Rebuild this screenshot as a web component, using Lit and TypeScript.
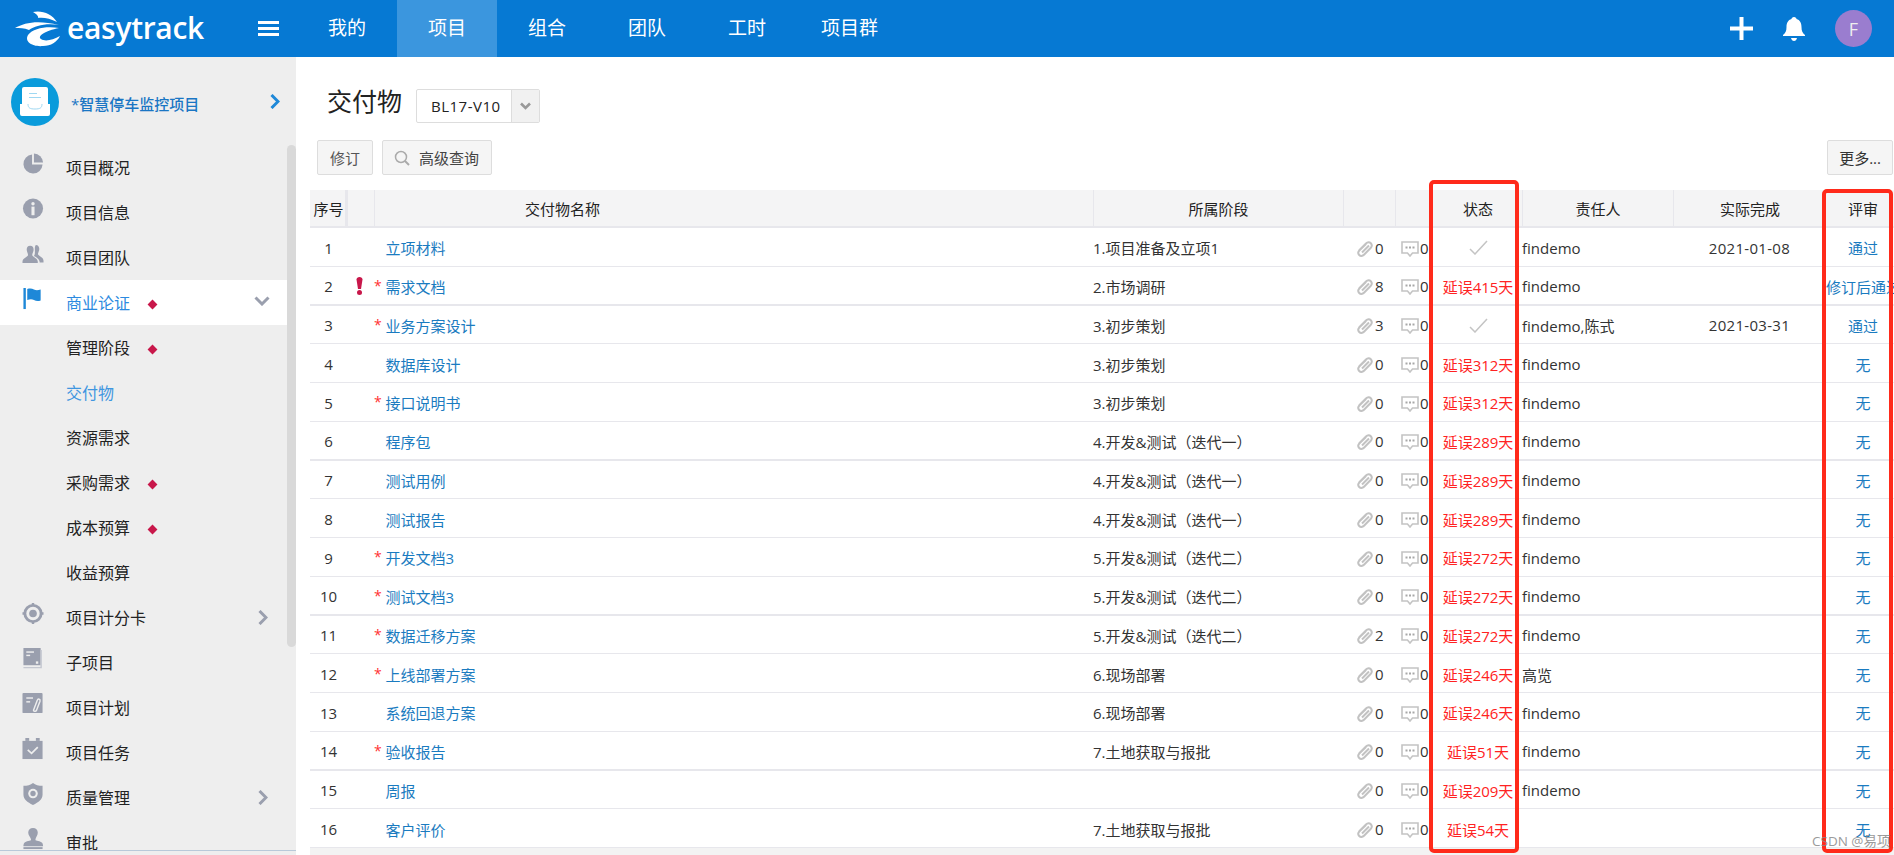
import { LitElement, html, css, svg } from "lit";
import { customElement } from "lit/decorators.js";

const G = "#9a9fae";
const icons: Record<string, any> = {
  pie: svg`<path fill="${G}" d="M10 1.500A10 10 0 1 0 21 12H10Z"/><path fill="${G}" d="M12 0.500A10 10 0 0 1 21.500 10H12Z"/>`,
  info: svg`<circle cx="11" cy="11" r="10.500" fill="${G}"/><circle cx="11" cy="6" r="1.800" fill="#eee"/><rect x="9.400" y="9" width="3.200" height="9" fill="#eee"/>`,
  team: svg`<path fill="${G}" d="M14 2c3 0 4 3 3.400 5.500-.4 1.600-1.200 3-1.200 4 0 2 5.800 3 5.800 7v2h-4c0-4-3.500-5.500-6-7 1-1.500 1-3 1-5 0-2.500-.5-4.500 1-6.500Z"/><path fill="${G}" d="M8 3c3 0 4 2.500 3.500 5-.4 1.800-1.300 3-1.300 4.500C10.200 14.500 16 15.500 16 19.500V21H0v-1.500c0-4 5.800-5 5.800-7C5.800 11 5 9.800 4.600 8 4 5.500 5 3 8 3Z"/>`,
  flag: svg`<rect x="1" y="0" width="2.500" height="22" fill="#1e88d8"/><path fill="#1e88d8" d="M5 1c3-1 5-.5 7 .5s4 1 7 0V13c-3 1-5 .5-7-.5s-4-1-7 0Z"/>`,
  target: svg`<circle cx="11" cy="11" r="8.500" fill="none" stroke="${G}" stroke-width="3"/><circle cx="11" cy="11" r="4" fill="${G}"/><path stroke="${G}" stroke-width="2.500" d="M11 0v3M11 19v3M0 11h3M19 11h3"/>`,
  sub: svg`<rect x="1" y="0" width="18" height="18" fill="${G}"/><path d="M1 20.500h18.500V2" fill="none" stroke="#c4c7d0" stroke-width="1.500"/><rect x="4" y="3.500" width="8" height="1.500" fill="#eee"/><rect x="4" y="7" width="4" height="1.500" fill="#eee"/><rect x="14" y="14" width="2.500" height="2.500" fill="#eee"/>`,
  plan: svg`<rect x="0" y="0" width="21" height="21" rx="1" fill="${G}"/><rect x="4" y="4.500" width="7" height="1.500" fill="#eee"/><rect x="4" y="8.500" width="4" height="1.500" fill="#eee"/><path d="M11.500 18 15.500 7.500c.8-2 3.500-1 2.800 1L14.500 18.500c-.5 1-3 .8-3-.5Z" fill="none" stroke="#eee" stroke-width="1.500"/>`,
  task: svg`<rect x="0" y="3" width="21" height="19" fill="${G}"/><rect x="3" y="0" width="4" height="3" fill="${G}"/><rect x="14" y="0" width="4" height="3" fill="${G}"/><path d="M5.500 12.500 9.500 16 16 9.500" fill="none" stroke="#eee" stroke-width="1.800"/>`,
  shield: svg`<path fill="${G}" d="M11 0c2.500 2 6 3 10 3v9c0 5-4 8-10 11C5 20 1 17 1 12V3c4 0 7.500-1 10-3Z"/><circle cx="11" cy="11" r="5" fill="#eee"/><circle cx="11" cy="11" r="2.800" fill="${G}"/>`,
  stamp: svg`<path fill="${G}" d="M11 0c3 0 5 2 5 5 0 3-2.500 5-2.500 7.500 0 1 5.500 1 7 3 .8 1 1 2.500 1 3.500H1c0-1 .2-2.500 1-3.500 1.500-2 7-2 7-3C9 10 6 8 6 5c0-3 2-5 5-5Z"/><rect x="1" y="20" width="20" height="2" fill="${G}"/>`,
};

type Item = { label: string; icon?: string; dot?: boolean; chev?: "r" | "d"; cls?: string };
const items: Item[] = [
  { label: "项目概况", icon: "pie" },
  { label: "项目信息", icon: "info" },
  { label: "项目团队", icon: "team" },
  { label: "商业论证", icon: "flag", dot: true, chev: "d", cls: "open" },
  { label: "管理阶段", dot: true },
  { label: "交付物", cls: "cur" },
  { label: "资源需求" },
  { label: "采购需求", dot: true },
  { label: "成本预算", dot: true },
  { label: "收益预算" },
  { label: "项目计分卡", icon: "target", chev: "r" },
  { label: "子项目", icon: "sub" },
  { label: "项目计划", icon: "plan" },
  { label: "项目任务", icon: "task" },
  { label: "质量管理", icon: "shield", chev: "r" },
  { label: "审批", icon: "stamp" },
];

const P4a = "4.开发&测试（迭代一）";
const P4b = "5.开发&测试（迭代二）";
const rows = [
  { n: "立项材料", p: "1.项目准备及立项1", a: 0, s: "", o: "findemo", d: "2021-01-08", r: "通过" },
  { n: "需求文档", star: 1, warn: 1, p: "2.市场调研", a: 8, s: "延误415天", o: "findemo", d: "", r: "修订后通过" },
  { n: "业务方案设计", star: 1, p: "3.初步策划", a: 3, s: "", o: "findemo,陈式", d: "2021-03-31", r: "通过" },
  { n: "数据库设计", p: "3.初步策划", a: 0, s: "延误312天", o: "findemo", d: "", r: "无" },
  { n: "接口说明书", star: 1, p: "3.初步策划", a: 0, s: "延误312天", o: "findemo", d: "", r: "无" },
  { n: "程序包", p: P4a, a: 0, s: "延误289天", o: "findemo", d: "", r: "无" },
  { n: "测试用例", p: P4a, a: 0, s: "延误289天", o: "findemo", d: "", r: "无" },
  { n: "测试报告", p: P4a, a: 0, s: "延误289天", o: "findemo", d: "", r: "无" },
  { n: "开发文档3", star: 1, p: P4b, a: 0, s: "延误272天", o: "findemo", d: "", r: "无" },
  { n: "测试文档3", star: 1, p: P4b, a: 0, s: "延误272天", o: "findemo", d: "", r: "无" },
  { n: "数据迁移方案", star: 1, p: P4b, a: 2, s: "延误272天", o: "findemo", d: "", r: "无" },
  { n: "上线部署方案", star: 1, p: "6.现场部署", a: 0, s: "延误246天", o: "高览", d: "", r: "无" },
  { n: "系统回退方案", p: "6.现场部署", a: 0, s: "延误246天", o: "findemo", d: "", r: "无" },
  { n: "验收报告", star: 1, p: "7.土地获取与报批", a: 0, s: "延误51天", o: "findemo", d: "", r: "无" },
  { n: "周报", p: "", a: 0, s: "延误209天", o: "findemo", d: "", r: "无" },
  { n: "客户评价", p: "7.土地获取与报批", a: 0, s: "延误54天", o: "", d: "", r: "无" },
];

const chevron = (dir: "r" | "d") =>
  dir === "d"
    ? html`<svg class="chev cd" width="16" height="10" viewBox="0 0 16 10"><path d="M1.500 1.500 8 8l6.500-6.500" fill="none" stroke="#9a9fae" stroke-width="3"/></svg>`
    : html`<svg class="chev cr" width="10" height="15" viewBox="0 0 10 15"><path d="M1.500 1 8 7.500 1.500 14" fill="none" stroke="#9a9fae" stroke-width="3"/></svg>`;

@customElement("app-root")
export class AppRoot extends LitElement {
  static styles = css`
    :host { display: block; width: 100%; height: 855px; overflow: hidden; position: relative;
      font-family: "Open Sans", "Noto Sans CJK SC", sans-serif; font-size: 15px; color: #333; }
    .top { height: 57px; background: #0679d3; display: flex; align-items: stretch; color: #fff; }
    .logo { width: 258px; display: flex; align-items: center; padding-left: 15px; box-sizing: border-box; gap: 6px; }
    .logo-t { font-size: 30px; font-weight: 600; letter-spacing: -0.3px; line-height: 1; margin-top: -2px; }
    .burger { width: 39px; display: flex; flex-direction: column; gap: 3px; padding-top: 21px; box-sizing: border-box; }
    .burger i { display: block; width: 21px; height: 3px; background: #fff; }
    .tab { min-width: 100px; padding: 0 24px 3px; box-sizing: border-box; display: flex; align-items: center; justify-content: center; font-size: 19px; }
    .tab.on { background: #3b96de; }
    .top-r { margin-left: auto; display: flex; align-items: center; padding-right: 22px; }
    .avatar { width: 37px; height: 37px; border-radius: 50%; background: #9a7dcf; color: #eee; display: flex; align-items: center; justify-content: center; font-size: 18px; margin-left: 30px; }
    .bell { margin-left: 30px; }
    .body { display: flex; height: 798px; }
    .side { width: 296px; flex: none; background: #eee; display: flex; flex-direction: column; position: relative; }
    .proj { height: 88px; flex: none; display: flex; align-items: center; padding-left: 11px; box-sizing: border-box; padding-top: 1px; }
    .proj-ic { width: 48px; height: 48px; flex: none; margin-right: 12px; }
    .proj-t { color: #1a76c4; font-size: 15px; font-weight: 500; flex: 1; margin-top: 3px; }
    .proj-c { margin-right: 16px; }
    .list { flex: 1; overflow: hidden; padding-right: 9px; border-bottom: 1px solid #b9c9d9; margin-bottom: 4px; }
    .item { height: 45px; display: flex; align-items: center; padding-left: 22px; font-size: 16px; color: #222; position: relative; }
    .ic { width: 22px; height: 22px; flex: none; margin-right: 22px; margin-top: -7px; }
    .lab { line-height: 1; margin-top: 1px; }
    .item.open { background: #fff; color: #2b8ae0; }
    .item.cur { color: #3f96e0; }
    .dot { width: 7px; height: 7px; background: #c8174a; transform: rotate(45deg); margin: 3px 0 0 19px; }
    .chev { position: absolute; }
    .cd { right: 17px; top: 16px; }
    .cr { right: 19px; top: 15px; }
    .thumb { position: absolute; right: 0; top: 88px; width: 9px; height: 502px; background: #d9d9d9; border-radius: 5px; }
    .main { flex: 1; min-width: 0; overflow: hidden; display: flex; flex-direction: column; }
    .head { display: flex; padding: 26px 0 0 31px; margin-bottom: 17px; }
    .title { font-size: 25px; line-height: 36px; color: #222; margin-right: 14px; }
    .sel { margin-top: 6px; width: 124px; height: 34px; box-sizing: border-box; border: 1px solid #ddd; border-radius: 2px; display: flex; color: #222; font-size: 15px; letter-spacing: 0.5px; }
    .sel-t { flex: 1; padding-left: 14px; line-height: 32px; }
    .sel-b { width: 27px; background: #f1f1f1; border-left: 1px solid #ddd; display: flex; align-items: center; justify-content: center; }
    .tools { display: flex; gap: 9px; padding: 0 1px 0 21px; margin-bottom: 15px; }
    .btn { height: 35px; box-sizing: border-box; border: 1px solid #ddd; border-radius: 2px; background: #f5f5f5; padding: 0 12px; display: flex; align-items: center; font-size: 15px; color: #444; }
    .btn.gray { color: #555; }
    .btn.more { margin-left: auto; color: #333; padding: 0 11px; }
    .btn svg { margin-right: 9px; margin-left: -1px; }
    .tbl { margin-left: 14px; width: 1590px; flex: none; }
    .row { display: grid; grid-template-columns: 37px 27px 719px 250px 52px 39px 88px 151px 153px 74px; height: 38.75px; box-sizing: border-box; border-bottom: 1px solid #e7e7ec; align-items: center; white-space: nowrap; padding-top: 2px; }
    .row.thick { border-bottom-width: 2px; }
    .row.hd { height: 38px; background: #f4f4f5; border-bottom: 2px solid #e7e7ec; color: #222; align-items: stretch; padding-top: 0; }
    .hd > div { display: flex; align-items: center; justify-content: center; border-left: 1px solid #e7e7ec; }
    .hd > div:first-child { border-left: 0; border-right: 2px solid #e7e7ec; padding-left: 2px; }
    .hd > .hn { justify-content: flex-start; padding-left: 150px; }
    .hd > .hb { border-left: 0; }
    .ctr { text-align: center; }
    .date { letter-spacing: 0.3px; }
    .warn { display: flex; justify-content: center; padding-right: 3px; }
    .name { display: flex; align-items: center; }
    .star { width: 11.500px; flex: none; color: #f33; font-size: 14px; margin-top: -2px; }
    .link { color: #1a7bc0; }
    .cnt { display: flex; align-items: center; }
    .cnt.a { padding-left: 14px; gap: 2px; color: #333; }
    .cnt.c { padding-left: 6px; gap: 1px; }
    .cnt svg { margin-top: 2px; flex: none; }
    .st { color: #f22; text-align: center; display: flex; justify-content: center; align-items: center; }
    .foot { flex: 1; margin-left: 14px; background: #f3f3f3; }
    .redbox { position: absolute; border: 4px solid #ff2a1a; border-radius: 5px; box-sizing: border-box; pointer-events: none; }
    .r1 { left: 1429px; top: 180px; width: 90px; height: 673px; }
    .r2 { left: 1822px; top: 189px; width: 71px; height: 664px; }
    .wm { position: absolute; left: 1812px; top: 830px; font-size: 13.500px; color: #8a8a8a; opacity: .85; white-space: nowrap; }
  `;

  render() {
    return html`
      <div class="top">
        <div class="logo">
          <svg width="46" height="36" viewBox="0 0 46 36" fill="#fff">
            <path d="M18 1C27-1 37 3 42 11 35 7 27 6 23 7 24 5 21 3 18 1Z"/>
            <path d="M0 17C10 11 24 9 44 14 30 12 20 15 14 19 9 17 5 17 0 17Z"/>
            <path d="M44 17C32 15 18 17 13 24 9 31 18 36 28 35 36 35 42 31 45 25 38 29 30 31 26 28 22 25 30 20 44 17Z"/>
          </svg>
          <span class="logo-t">easytrack</span>
        </div>
        <div class="burger"><i></i><i></i><i></i></div>
        ${["我的", "项目", "组合", "团队", "工时", "项目群"].map(
          (t) => html`<div class="tab ${t === "项目" ? "on" : ""}">${t}</div>`
        )}
        <div class="top-r">
          <svg width="23" height="23" viewBox="0 0 23 23"><path d="M11.500 0v23M0 11.500h23" stroke="#fff" stroke-width="4"/></svg>
          <svg class="bell" width="22" height="24" viewBox="0 0 22 24" fill="#fff"><path d="M11 0c1.500 0 2.500 1 2.500 2C17 3 18.500 6 18.500 10c0 4 1 6 3.500 8v1H0v-1c2.500-2 3.500-4 3.500-8 0-4 1.500-7 5-8 0-1 1-2 2.500-2Z"/><path d="M8 21h6c-.5 2-1.500 3-3 3s-2.500-1-3-3Z"/></svg>
          <div class="avatar">F</div>
        </div>
      </div>
      <div class="body">
        <aside class="side">
          <div class="proj">
            <svg class="proj-ic" viewBox="0 0 48 48">
              <circle cx="24" cy="24" r="24" fill="#0a9bdb"/>
              <rect x="11" y="9" width="26" height="24" rx="2" fill="#fff"/>
              <rect x="18" y="15" width="8" height="1" fill="#9fd8f2"/><rect x="18" y="19" width="12" height="1" fill="#9fd8f2"/>
              <path d="M9 26h8c0 4 2 5 7 5s7-1 7-5h8v10a2 2 0 0 1-2 2H11a2 2 0 0 1-2-2Z" fill="#fff"/>
              <path d="M17 26c0 4 2 5 7 5s7-1 7-5" fill="none" stroke="#9fd8f2"/>
            </svg>
            <div class="proj-t">*智慧停车监控项目</div>
            <svg class="proj-c" width="10" height="15" viewBox="0 0 10 15"><path d="M1.500 1 8 7.500 1.500 14" fill="none" stroke="#1e88d8" stroke-width="3"/></svg>
          </div>
          <div class="list">
            ${items.map(
              (it) => html`<div class="item ${it.cls ?? ""}">
                <svg class="ic" viewBox="0 0 22 23">${it.icon ? icons[it.icon] : ""}</svg>
                <span class="lab">${it.label}</span>
                ${it.dot ? html`<span class="dot"></span>` : ""}
                ${it.chev ? chevron(it.chev) : ""}
              </div>`
            )}
          </div>
          <div class="thumb"></div>
        </aside>
        <main class="main">
          <div class="head">
            <div class="title">交付物</div>
            <div class="sel">
              <div class="sel-t">BL17-V10</div>
              <div class="sel-b"><svg width="11" height="8" viewBox="0 0 11 8"><path d="M1 1.500 5.500 6 10 1.500" fill="none" stroke="#999" stroke-width="2.600"/></svg></div>
            </div>
          </div>
          <div class="tools">
            <div class="btn gray">修订</div>
            <div class="btn">
              <svg width="16" height="16" viewBox="0 0 16 16"><circle cx="7" cy="7" r="5.500" fill="none" stroke="#aaa" stroke-width="1.500"/><path d="M11 11l4 4" stroke="#aaa" stroke-width="2"/></svg>
              高级查询
            </div>
            <div class="btn more">更多...</div>
          </div>
          <div class="tbl">
            <div class="row hd">
              <div>序号</div><div></div><div class="hn">交付物名称</div><div>所属阶段</div><div></div><div></div>
              <div class="hb">状态</div><div>责任人</div><div>实际完成</div><div class="hb">评审</div>
            </div>
            ${rows.map(
              (r, i) => html`<div class="row ${i % 4 === 1 ? "thick" : ""}">
                <div class="ctr">${i + 1}</div>
                <div class="warn">${r.warn
                  ? html`<svg width="7" height="18" viewBox="0 0 7 18"><path d="M.5 2.500C.5 1 1.800 0 3.500 0s3 1 3 2.500L5 12H2Z" fill="#c8174a"/><circle cx="3.500" cy="15.500" r="2.500" fill="#c8174a"/></svg>`
                  : ""}</div>
                <div class="name"><span class="star">${r.star ? "*" : ""}</span><span class="link">${r.n}</span></div>
                <div>${r.p}</div>
                <div class="cnt a">
                  <svg width="16" height="16" viewBox="0 0 16 16"><path d="M2 9.500 9 2.500c1.500-1.500 3.600-1.500 4.800-.2s1.200 3.200-.2 4.700L7 13.800c-1.500 1.500-3.600 1.500-4.800.2S1 10.800 2.500 9.300L9 3M5 11.500 12 4.500" fill="none" stroke="#c2c2c2" stroke-width="2"/></svg>
                  <span>${r.a}</span>
                </div>
                <div class="cnt c">
                  <svg width="18" height="16" viewBox="0 0 18 16"><path d="M1 1h16v11h-5.500L9 15l-2.500-3H1Z" fill="#fff" stroke="#c4c4c4" stroke-width="1.600"/><path d="M4.500 6.500h2M8 6.500h2M11.500 6.500h2" stroke="#a8a8a8" stroke-width="2"/></svg>
                  <span>0</span>
                </div>
                <div class="st">${r.s
                  ? r.s
                  : html`<svg width="19" height="15" viewBox="0 0 19 15"><path d="M1 9l5 5L18 1" fill="none" stroke="#c4c4c4" stroke-width="1.500"/></svg>`}</div>
                <div>${r.o}</div>
                <div class="ctr date">${r.d}</div>
                <div class="ctr link">${r.r}</div>
              </div>`
            )}
          </div>
          <div class="foot"></div>
        </main>
      </div>
      <div class="redbox r1"></div>
      <div class="redbox r2"></div>
      <div class="wm">CSDN @易项</div>
    `;
  }
}
